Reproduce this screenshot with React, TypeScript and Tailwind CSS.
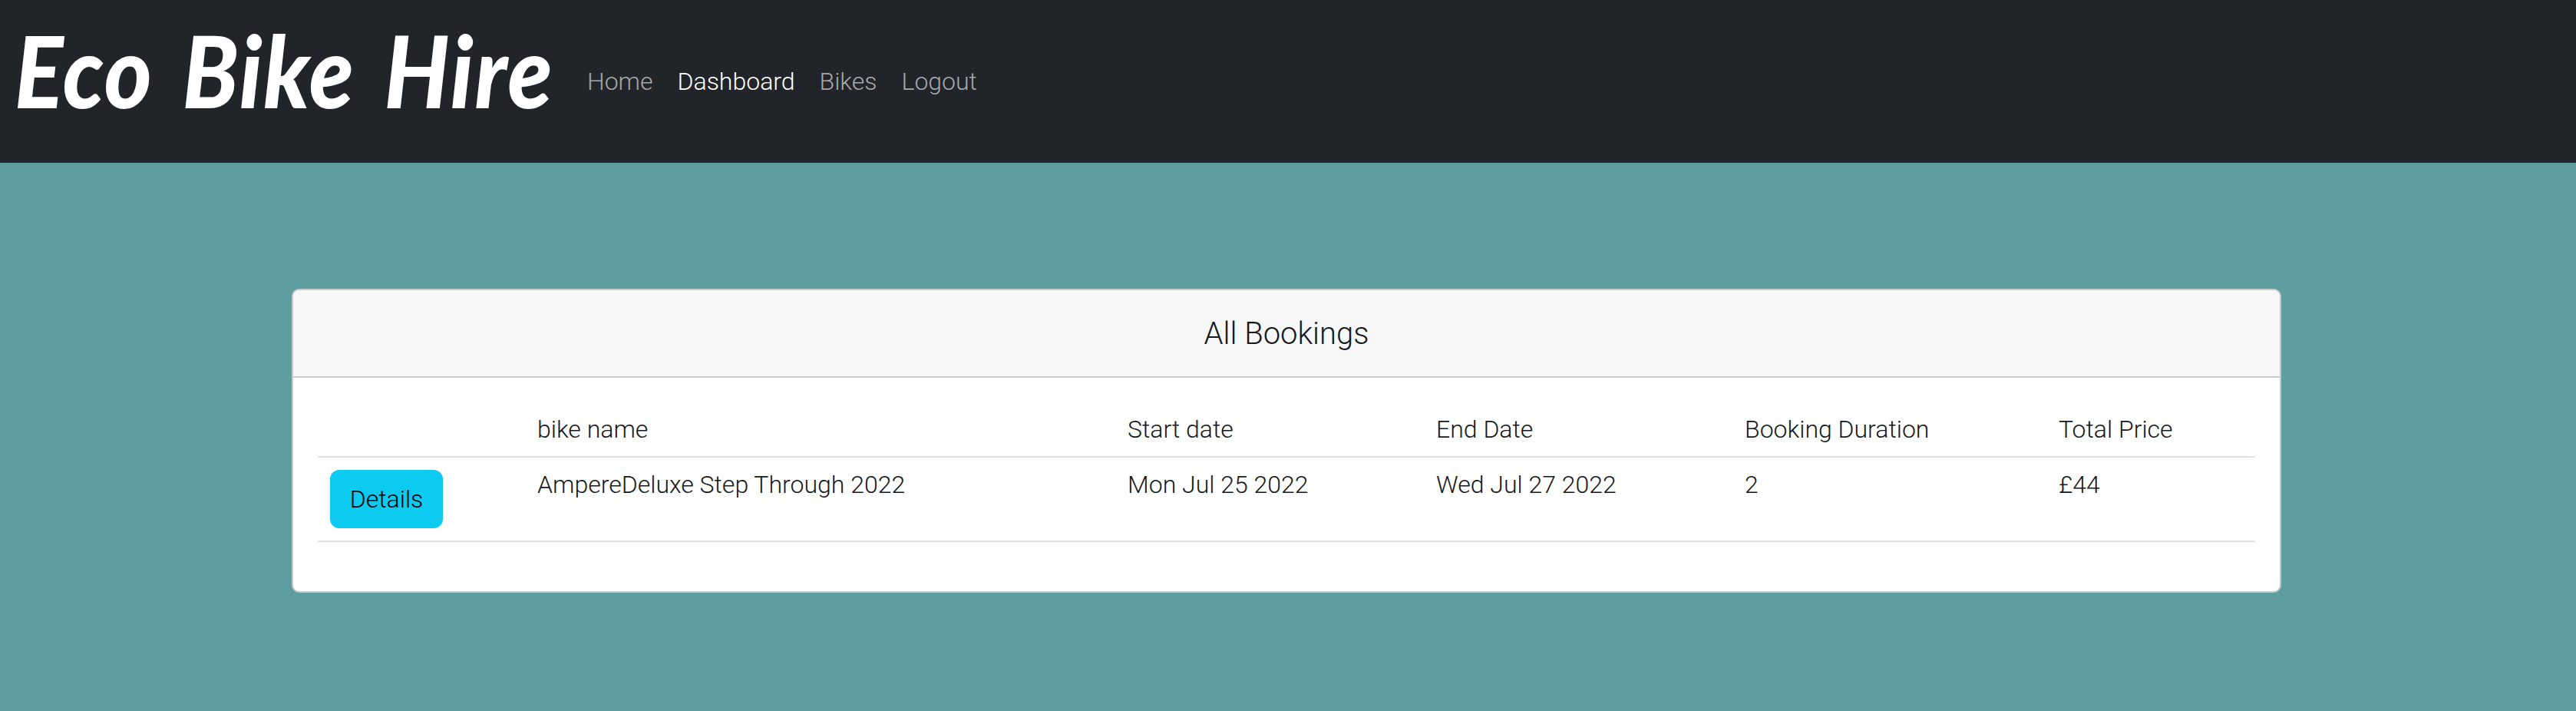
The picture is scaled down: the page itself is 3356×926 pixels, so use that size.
const links = [
  { label: "Home", active: false },
  { label: "Dashboard", active: true },
  { label: "Bikes", active: false },
  { label: "Logout", active: false },
];

const headings = ["", "bike name", "Start date", "End Date", "Booking Duration", "Total Price"];

function App() {
  return (
    <div className="min-h-screen bg-[#5f9ea0] font-['Roboto',sans-serif] text-[32px] font-light leading-[48px] text-[#212529]">
      <nav className="flex h-[212px] items-center bg-[#212529] pl-[19px]">
        <div className="mb-[30px] mr-[58px] w-[688px] shrink-0">
          <a className="block origin-left scale-x-[0.91] font-['Lato',sans-serif] text-[130px] font-black italic leading-none tracking-[2px] text-white whitespace-nowrap [word-spacing:12px]">
            Eco Bike Hire
          </a>
        </div>
        <ul className="flex gap-[32px]">
          {links.map((link) => (
            <li key={link.label} className={link.active ? "text-white" : "text-[#a6a7a9]"}>
              {link.label}
            </li>
          ))}
        </ul>
      </nav>

      <main className="pl-[380px] pr-[384px] pt-[164px]">
        <div className="overflow-hidden rounded-[10px] border-2 border-[#c8c9ca] bg-white">
          <h2 className="h-[114px] border-b-2 border-[#c8c9ca] bg-[#f7f7f7] text-center text-[40px] leading-[114px] text-[#16191c]">
            All Bookings
          </h2>
          <div className="px-[32px] pb-[64px] pt-[32px]">
            <table className="w-full table-fixed border-collapse text-left text-[#16191c]">
              <colgroup>
                <col className="w-[270px]" />
                <col className="w-[769px]" />
                <col className="w-[402px]" />
                <col className="w-[402px]" />
                <col className="w-[409px]" />
                <col />
              </colgroup>
              <thead>
                <tr className="border-b-2 border-[#dee2e6]">
                  {headings.map((heading) => (
                    <th key={heading} className="px-[16px] py-[11px] align-bottom font-light">
                      {heading}
                    </th>
                  ))}
                </tr>
              </thead>
              <tbody>
                <tr className="border-b-2 border-[#dee2e6]">
                  <td className="p-[16px] align-top">
                    <button className="h-[76px] w-[147px] rounded-[12px] bg-[#0dcaf0] text-black">
                      Details
                    </button>
                  </td>
                  <td className="px-[16px] pb-[16px] pt-[11px] align-top">AmpereDeluxe Step Through 2022</td>
                  <td className="px-[16px] pb-[16px] pt-[11px] align-top">Mon Jul 25 2022</td>
                  <td className="px-[16px] pb-[16px] pt-[11px] align-top">Wed Jul 27 2022</td>
                  <td className="px-[16px] pb-[16px] pt-[11px] align-top">2</td>
                  <td className="px-[16px] pb-[16px] pt-[11px] align-top">£44</td>
                </tr>
              </tbody>
            </table>
          </div>
        </div>
      </main>
    </div>
  );
}

export default App;
